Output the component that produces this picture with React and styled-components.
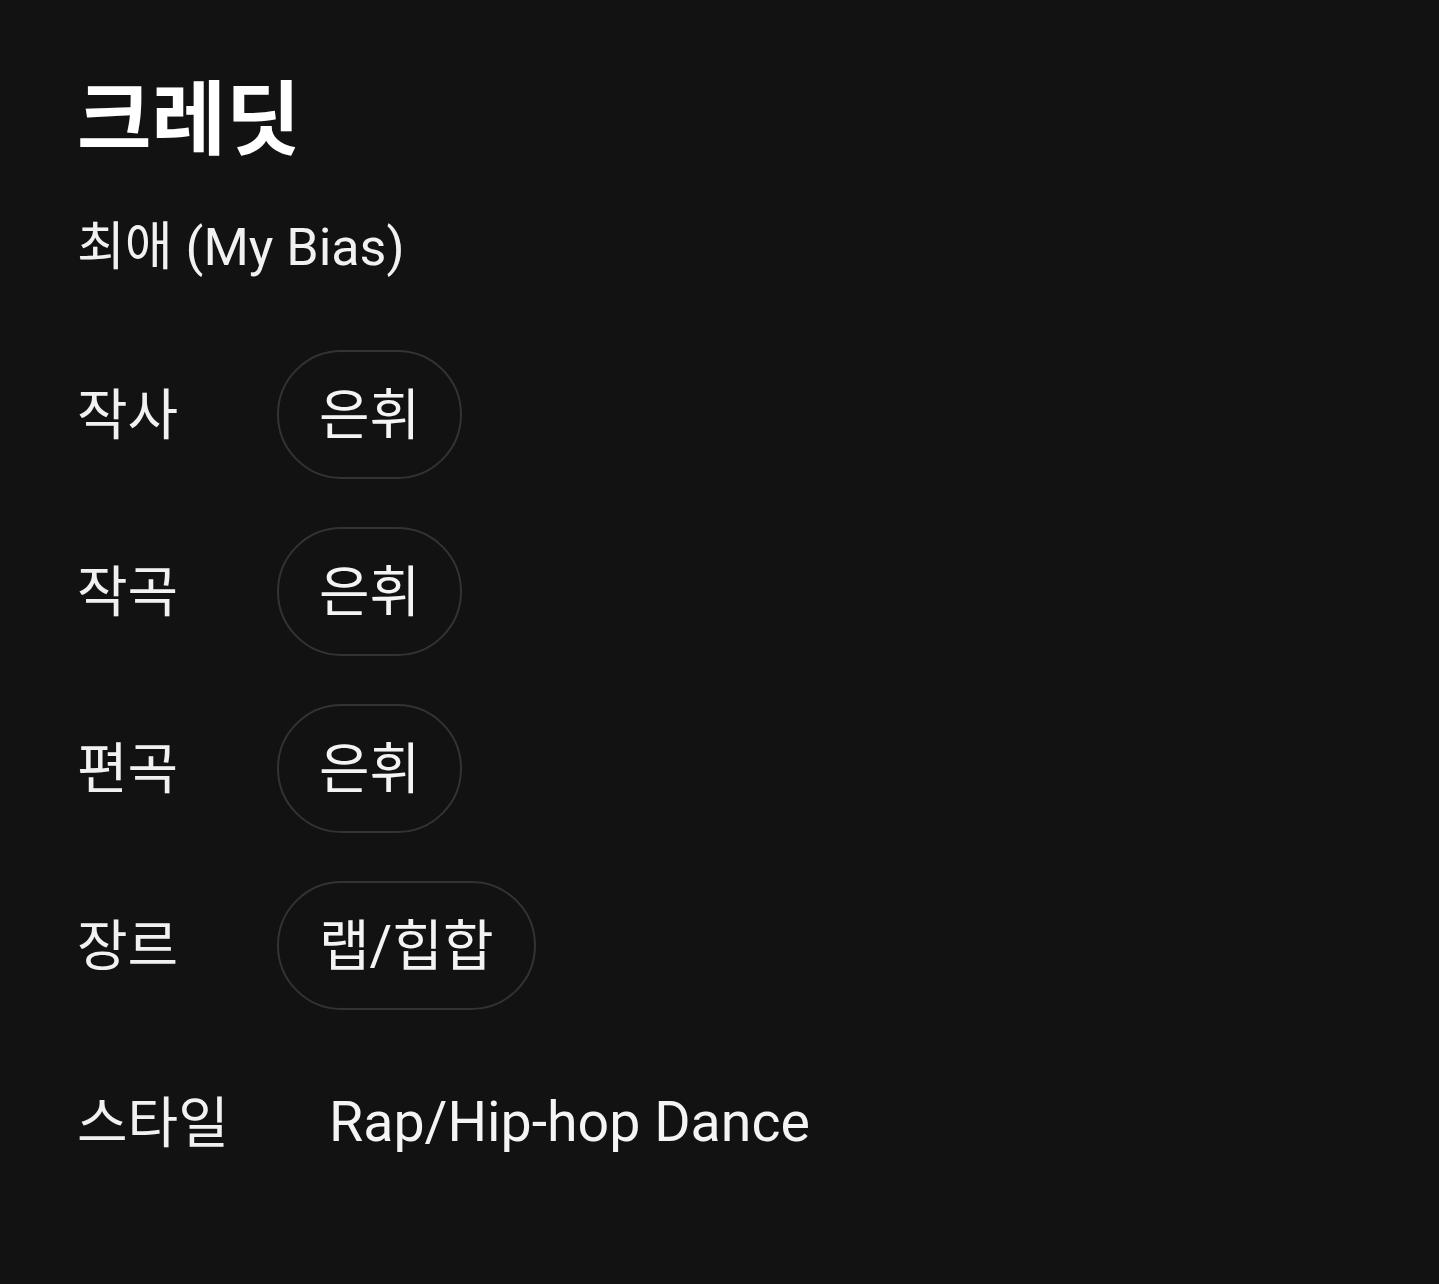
import React from 'react';
import styled, { createGlobalStyle } from 'styled-components';

const GlobalStyle = createGlobalStyle`
  html, body {
    margin: 0;
    padding: 0;
    background: #121212;
  }
  body {
    font-family: Roboto, "Noto Sans CJK KR", "Noto Sans", sans-serif;
    color: #f1f1f1;
  }
`;

const Page = styled.main`
  min-height: 1284px;
  box-sizing: border-box;
  padding: 73px 77px;
  background: #121212;
`;

const Title = styled.h1`
  margin: 0;
  font-size: 81px;
  line-height: 96px;
  font-weight: 700;
  color: #ffffff;
`;

const Subtitle = styled.div`
  margin-top: 48px;
  font-size: 52px;
  line-height: 62px;
`;

const CreditList = styled.dl`
  margin: 71px 0 0;
  display: flex;
  flex-direction: column;
  gap: 48px;
`;

const Row = styled.div`
  display: grid;
  grid-template-columns: 200px auto;
  align-items: center;
  height: 129px;
`;

const Label = styled.dt`
  font-size: 55px;
  line-height: 64px;
`;

const Values = styled.dd`
  margin: 0;
  display: flex;
  gap: 16px;
  align-items: center;
`;

const Chip = styled.span`
  display: inline-flex;
  align-items: center;
  box-sizing: border-box;
  height: 129px;
  padding: 0 40px;
  border: 2px solid #333333;
  border-radius: 65px;
  font-size: 55px;
  line-height: 64px;
  color: #f4f4f4;
`;

const PlainValue = styled.span`
  padding-left: ${(p) => p.$indent || 0}px;
  font-size: 55.5px;
  line-height: 64px;
  color: #f4f4f4;
`;

const credits = [
  { label: '작사', chips: ['은휘'] },
  { label: '작곡', chips: ['은휘'] },
  { label: '편곡', chips: ['은휘'] },
  { label: '장르', chips: ['랩/힙합'] },
  { label: '스타일', text: 'Rap/Hip-hop Dance' },
];

const App = () => {
  return (
    <>
      <GlobalStyle />
      <Page>
        <Title>크레딧</Title>
        <Subtitle>최애 (My Bias)</Subtitle>
        <CreditList>
          {credits.map((c) => (
            <Row key={c.label}>
              <Label>{c.label}</Label>
              <Values>
                {c.chips
                  ? c.chips.map((name) => <Chip key={name}>{name}</Chip>)
                  : <PlainValue $indent={52}>{c.text}</PlainValue>}
              </Values>
            </Row>
          ))}
        </CreditList>
      </Page>
    </>
  );
};

export default App;
